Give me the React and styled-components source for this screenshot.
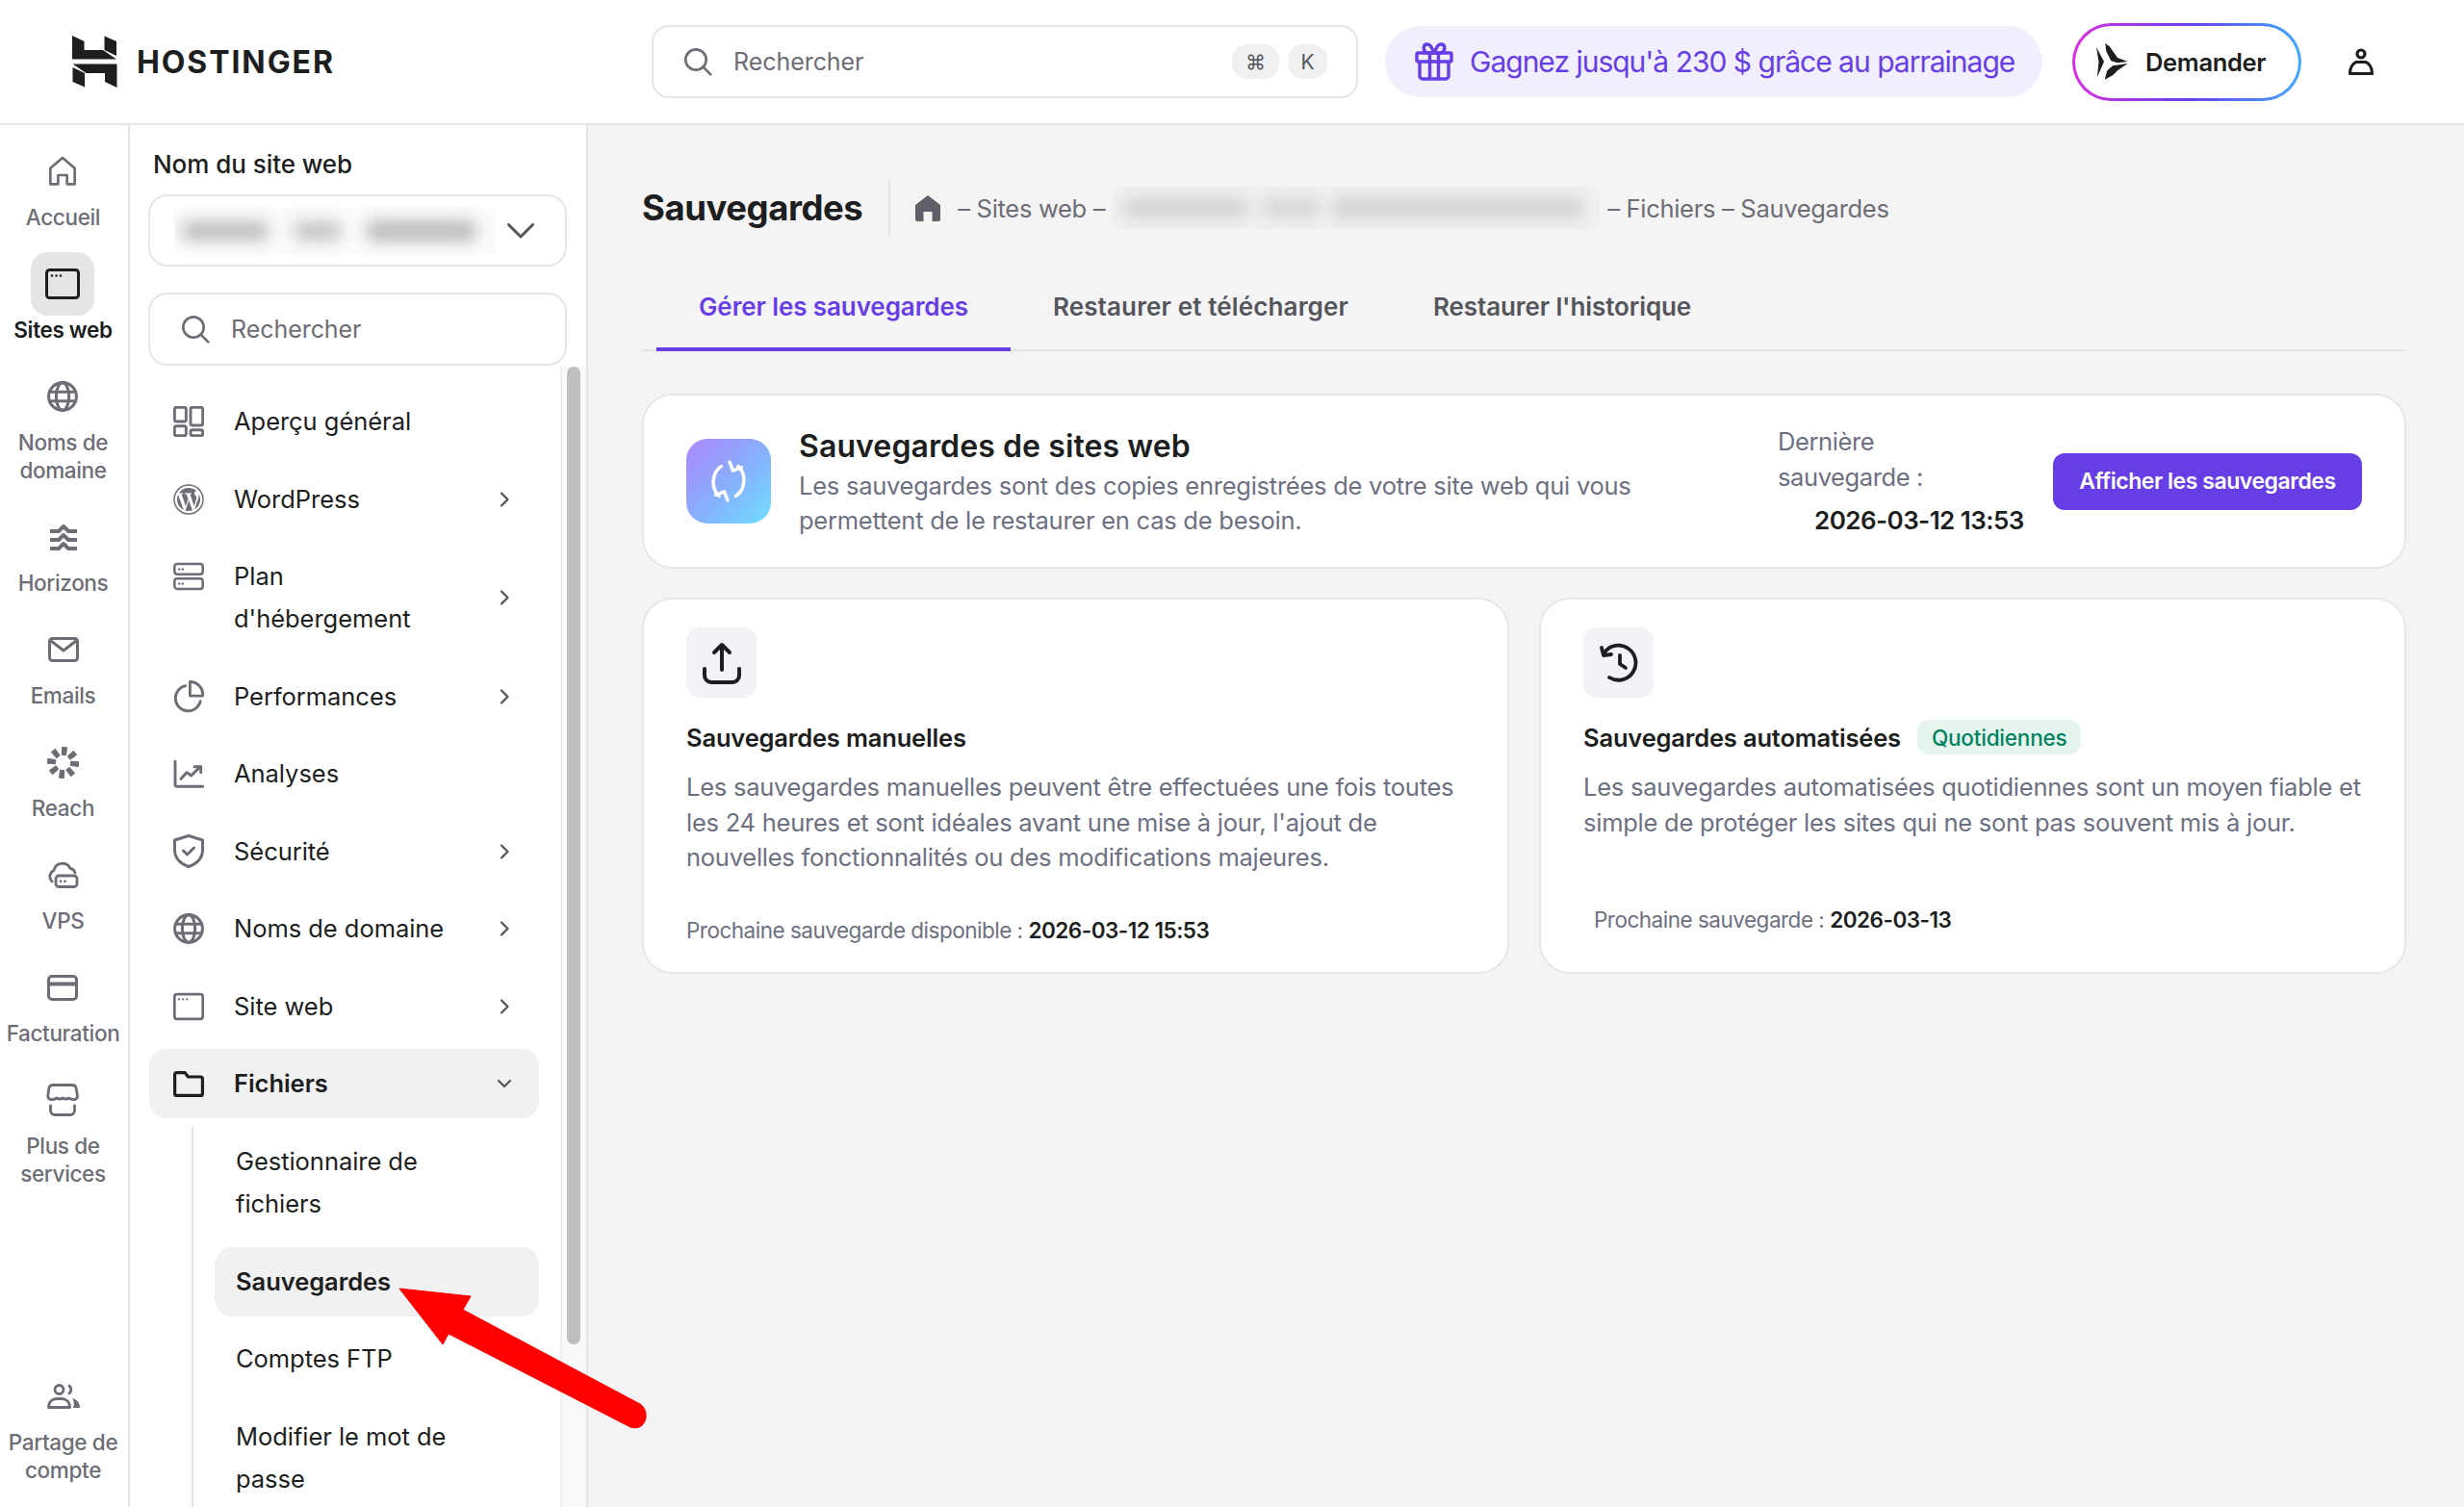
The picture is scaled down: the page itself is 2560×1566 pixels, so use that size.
import React from "react";
import styled, { createGlobalStyle } from "styled-components";

const Global = createGlobalStyle`
  html, body { margin: 0; padding: 0; background: #f4f4f4; }
  * { box-sizing: border-box; }
  body { font-family: "Inter", "Noto Sans", sans-serif; color: #1d1e20; }
`;

const Page = styled.div`
  width: 2560px; height: 1566px; overflow: hidden; position: relative;
  display: flex; flex-direction: column; background: #f4f4f4;
`;
const Header = styled.header`
  height: 130px; flex: none; background: #fff; border-bottom: 2px solid #e5e5e5;
  display: flex; align-items: center;
`;
const LogoWrap = styled.div`
  width: 677px; flex: none; padding-left: 75px; display: flex; align-items: center; gap: 20px; color: #1d1e20;
`;
const LogoText = styled.span`
  font-size: 32px; font-weight: 700; letter-spacing: 1.9px; line-height: 1; padding-top: 2px;
`;
const TopSearch = styled.div`
  width: 734px; height: 76px; flex: none; border: 2px solid #e6e6e6; border-radius: 18px;
  display: flex; align-items: center; padding: 0 30px 0 30px; color: #6d6d75; gap: 21px;
`;
const Placeholder = styled.span`
  font-size: 25px; letter-spacing: -0.05px; color: #6d6d75; flex: 1;
`;
const KbdGroup = styled.div`display: flex; gap: 9px;`;
const Kbd = styled.span`
  height: 36px; min-width: ${p => p.$w}px; border-radius: 16px; background: #f0f0f0; color: #55555c;
  display: inline-flex; align-items: center; justify-content: center; font-size: 21px;
`;
const Promo = styled.div`
  margin-left: 28px; width: 683px; height: 74px; flex: none; border-radius: 37px; background: #f1eefe; color: #673de6;
  display: flex; align-items: center; padding-left: 31px; gap: 17px;
`;
const PromoText = styled.span`font-size: 30px; letter-spacing: -1px; white-space: nowrap;`;
const Ask = styled.div`
  margin-left: 31px; width: 238px; height: 81px; flex: none; border-radius: 41px; padding: 3px;
  background: linear-gradient(90deg, #d92fe0 0%, #6a40e6 50%, #3fa9ff 100%);
`;
const AskInner = styled.div`
  width: 100%; height: 100%; background: #fff; border-radius: 38px; display: flex; align-items: center;
  padding-left: 22px; gap: 17px;
`;
const AskText = styled.span`font-size: 25.5px; font-weight: 600; letter-spacing: -0.35px;`;
const UserBtn = styled.div`margin-left: 48px; display: flex; color: #1d1e20;`;

const Body = styled.div`flex: 1; min-height: 0; display: flex;`;
const Rail = styled.nav`
  width: 135px; flex: none; background: #fff; border-right: 2px solid #e5e5e5;
  display: flex; flex-direction: column; align-items: center; padding: 15px 2px 24px 0; gap: 22px;
`;
const RailItem = styled.div`
  display: flex; flex-direction: column; align-items: center;
  margin-top: ${p => (p.$bottom ? "auto" : "0")};
`;
const RailIcon = styled.div`
  width: 66px; height: 66px; border-radius: 18px; display: flex; align-items: center; justify-content: center;
  background: ${p => (p.$active ? "#e5e5e5" : "transparent")};
  color: ${p => (p.$active ? "#1d1e20" : "#6d6d75")};
`;
const RailLabel = styled.div`
  font-size: 22.5px; line-height: 29px; text-align: center; letter-spacing: -0.35px; font-weight: ${p => (p.$active ? 600 : 500)};
  color: ${p => (p.$active ? "#1d1e20" : "#6d6d75")}; white-space: nowrap;
`;

const Panel = styled.aside`
  width: 476px; flex: none; background: #fff; border-right: 2px solid #e5e5e5; position: relative; overflow: hidden;
  padding: 25px 0 0 19px;
`;
const SiteLabel = styled.div`
  font-size: 26px; font-weight: 500; line-height: 32px; letter-spacing: -0.05px; margin: 0 0 15px 5px;
`;
const SiteSelect = styled.div`
  width: 435px; height: 75px; border: 2px solid #e6e6e6; border-radius: 20px; display: flex; align-items: center;
  padding-left: 25px; color: #55555c;
`;
const Blur = styled.div`
  width: ${p => p.$w}px; height: ${p => p.$h}px; background: ${p => p.$bg}; overflow: hidden; flex: none;
  display: flex; align-items: center; gap: ${p => p.$gap}px; padding-left: ${p => p.$pad}px;
`;
const Blot = styled.span`
  display: block; flex: none; width: ${p => p.$w}px; height: ${p => p.$h}px; background: ${p => p.$c}; border-radius: 8px; filter: blur(8px);
`;
const SelectChevron = styled.div`margin-left: 12px; display: flex;`;
const PanelSearch = styled.div`
  width: 435px; height: 76px; margin-top: 27px; border: 2px solid #e6e6e6; border-radius: 20px;
  display: flex; align-items: center; padding-left: 31px; gap: 21px; color: #6d6d75;
`;
const NavList = styled.div`
  margin-top: 22px; width: 405px; margin-left: 1px; display: flex; flex-direction: column; gap: 8.5px;
`;
const NavRow = styled.div`
  display: flex; align-items: ${p => (p.$top ? "flex-start" : "center")}; padding: 14px 24px 14px 25px; border-radius: 18px;
  background: ${p => (p.$active ? "#f1f1f1" : "transparent")}; position: relative;
`;
const NavIcon = styled.div`
  width: 32px; height: 44px; flex: none; margin-right: 31px; display: flex; align-items: center; justify-content: center;
  color: ${p => (p.$active ? "#1d1e20" : "#6d6d75")};
`;
const NavText = styled.div`
  flex: 1; font-size: 25.5px; line-height: 44px; letter-spacing: -0.04px; font-weight: ${p => (p.$active ? 600 : 400)}; color: #1d1e20;
`;
const NavChevron = styled.div`
  width: 24px; align-self: center; display: flex; justify-content: center; color: #55555c;
`;
const SubList = styled.div`
  margin: 8px 0 0 44px; padding: 1px 0 0 22px; border-left: 2px solid #e3e3e6; display: flex; flex-direction: column; gap: 8.5px;
`;
const SubRow = styled.div`
  padding: 14px 22px; border-radius: 18px; font-size: 25.5px; line-height: 44px; letter-spacing: -0.05px;
  font-weight: ${p => (p.$active ? 600 : 400)}; background: ${p => (p.$active ? "#f1f1f1" : "transparent")}; color: #1d1e20;
`;
const Track = styled.div`
  position: absolute; right: 0; top: 251px; bottom: 0; width: 27px; background: #f9f9f9; border-left: 2px solid #eeeeee;
`;
const Thumb = styled.div`
  position: absolute; left: 5px; top: 0; width: 14px; height: 1016px; border-radius: 7px; background: #bfbfbf;
`;

const Main = styled.main`flex: 1; min-width: 0; padding: 57px 60px 0 56px;`;
const TitleRow = styled.div`display: flex; align-items: center; height: 58px;`;
const Title = styled.h1`
  margin: 0; font-size: 36.5px; font-weight: 700; letter-spacing: -0.45px; line-height: 1; padding-right: 27px;
`;
const Sep = styled.div`width: 2px; height: 58px; background: #e3e3e3; margin-right: 25px;`;
const Crumb = styled.span`
  font-size: 25.5px; letter-spacing: -0.3px; color: #6d6d75; white-space: nowrap; margin: 0 ${p => p.$r}px 0 ${p => p.$l}px;
`;
const Tabs = styled.div`
  margin-top: 28px; height: 92px; padding-left: 15px; border-bottom: 2px solid #e5e5e5; display: flex;
`;
const Tab = styled.div`
  height: 92px; padding: 2px 44px 0; display: flex; align-items: center; font-size: 26px; font-weight: 600;
  letter-spacing: ${p => p.$track ?? -0.1}px; white-space: nowrap;
  color: ${p => (p.$active ? "#673de6" : "#55555c")}; border-bottom: 4px solid ${p => (p.$active ? "#673de6" : "transparent")};
`;
const Card = styled.section`
  background: #fff; border: 2px solid #e8e8e8; border-radius: 32px;
`;
const TopCard = styled(Card)`
  margin-top: 44px; height: 182px; display: flex; align-items: center; padding: 0 44px;
`;
const Gradient = styled.div`
  width: 88px; height: 88px; flex: none; border-radius: 22px; color: #fff; display: flex; align-items: center; justify-content: center;
  background: linear-gradient(135deg, #ae86fb 0%, #88aefd 50%, #6fdfff 100%);
`;
const TopText = styled.div`margin-left: 29px; width: 901px; flex: none; padding-top: 1px;`;
const TopTitle = styled.h2`margin: 0; font-size: 32px; line-height: 44px; font-weight: 600; letter-spacing: 0.1px;`;
const Desc = styled.p`
  margin: ${p => p.$m || 0}px 0 0; font-size: 25.5px; line-height: 36.5px; letter-spacing: -0.25px; color: #6d7081;
`;
const Last = styled.div`margin-left: 116px; width: 254px; flex: none; padding-top: 2px;`;
const LastLabel = styled.div`font-size: 25.5px; line-height: 37px; letter-spacing: -0.4px; color: #6d7081;`;
const LastDate = styled.div`
  font-size: 26px; line-height: 42px; margin-top: 6px; font-weight: 600; letter-spacing: -0.55px; white-space: nowrap; margin-left: 38px; color: #1d1e20;
`;
const PrimaryBtn = styled.button`
  margin-left: 32px; width: 323px; height: 59px; border: none; border-radius: 12px; background: #673de6; color: #fff;
  font: 600 23px "Inter", sans-serif; letter-spacing: -0.45px; white-space: nowrap;
`;
const Grid = styled.div`margin-top: 30px; display: grid; grid-template-columns: 1fr 1fr; gap: 31px;`;
const FeatureCard = styled(Card)`
  height: 391px; padding: 29px 44px 28px; display: flex; flex-direction: column;
`;
const IconTile = styled.div`
  width: 73px; height: 73px; border-radius: 14px; background: #f2f3f7; display: flex; align-items: center; justify-content: center; color: #1d1e20;
`;
const FeatureHead = styled.div`margin-top: 23px; height: 36px; display: flex; align-items: center; gap: 17px;`;
const FeatureTitle = styled.h3`margin: 0; font-size: 25.5px; font-weight: 600; letter-spacing: -0.17px; white-space: nowrap;`;
const Badge = styled.span`
  height: 36px; padding: 0 15px; border-radius: 12px; background: #e6f4ee; color: #008361; font-size: 22.5px; font-weight: 500; letter-spacing: -0.2px;
  display: inline-flex; align-items: center;
`;
const Foot = styled.div`
  margin-top: auto; font-size: 22.5px; line-height: 30px; letter-spacing: -0.5px; color: #6d7081; white-space: nowrap;
  padding-left: ${p => (p.$inset ? 11 : 0)}px; margin-bottom: ${p => (p.$inset ? 11 : 0)}px;
`;
const FootDate = styled.b`font-weight: 600; color: #1d1e20; letter-spacing: -0.5px;`;
const Arrow = styled.svg`position: absolute; left: 400px; top: 1330px;`;

const S = ({ size = 32, w = 2, children, fill = "none", vb = 24 }) => (
  <svg width={size} height={size} viewBox={`0 0 ${vb} ${vb}`} fill={fill} stroke="currentColor" strokeWidth={w} strokeLinecap="round" strokeLinejoin="round">{children}</svg>
);
const Logo = () => (
  <svg width="47" height="54" viewBox="0 0 47 54" fill="currentColor">
    <path d="M0 0l12.500 6v9H32l14 9.500H0z" />
    <path d="M33.500 .5L46 6v15l-12.500-6z" />
    <path d="M46.500 54L34 48v-9H14.500L.5 29.500h46z" />
    <path d="M13 53.500L.5 48V33L13 39z" />
  </svg>
);
const SearchI = ({ size = 32 }) => <S size={size} w={2}><circle cx="10.500" cy="10.500" r="8" /><path d="M16.500 16.500L22 22" /></S>;
const HomeI = () => <S><path d="M2.500 22V9.500L12 1.500l9.500 8V22h-6v-7h-7v7z" /></S>;
const BrowserI = () => (
  <svg width="36" height="32" viewBox="0 0 36 32" fill="none" stroke="currentColor" strokeWidth="3" strokeLinecap="round">
    <rect x="1.500" y="1.500" width="33" height="29" rx="3" /><path d="M7 7.500h.01M11.500 7.500h.01M16 7.500h.01" strokeWidth="2.600" />
  </svg>
);
const GlobeI = () => <S w={2.300}><circle cx="12" cy="12" r="10.800" /><ellipse cx="12" cy="12" rx="5" ry="10.800" /><path d="M1.800 8.500h20.400M1.800 15.500h20.400" /></S>;
const HorizonsI = () => (
  <svg width="30" height="30" viewBox="0 0 30 30" fill="none" stroke="currentColor" strokeWidth="4" strokeLinejoin="round">
    <path d="M1 9H10L15 4L20 9H29" /><path d="M1 18H10L15 13L20 18H29" /><path d="M1 27H10L15 22L20 27H29" />
  </svg>
);
const MailI = () => (
  <svg width="32" height="26" viewBox="0 0 32 26" fill="none" stroke="currentColor" strokeWidth="3" strokeLinejoin="round">
    <rect x="1.500" y="1.500" width="29" height="23" rx="3" /><path d="M3 4l13 10 13-10" />
  </svg>
);
const ReachI = () => (
  <svg width="33" height="33" viewBox="0 0 33 33" fill="currentColor">
    {[0, 45, 90, 135, 180, 225, 270, 315].map(a => <path key={a} d="M13.500 0h6l-.5 9h-5z" transform={`rotate(${a + 6} 16.500 16.500)`} />)}
  </svg>
);
const VpsI = () => (
  <svg width="32" height="28" viewBox="0 0 32 28" fill="none" stroke="currentColor" strokeWidth="2.800" strokeLinecap="round" strokeLinejoin="round">
    <path d="M4 21A7 7 0 0 1 6 9.500 9 9 0 0 1 23 7.500a6 6 0 0 1 5 4.500" /><rect x="8" y="15" width="22" height="11.500" rx="3" /><path d="M13 20.800h.01M17.500 20.800h.01" />
  </svg>
);
const CardI = () => (
  <svg width="32" height="27" viewBox="0 0 32 27" fill="none" stroke="currentColor" strokeWidth="3">
    <rect x="1.500" y="1.500" width="29" height="24" rx="3.500" /><path d="M1.500 9.500h29" strokeWidth="4" />
  </svg>
);
const StoreI = () => (
  <svg width="34" height="34" viewBox="0 0 34 34" fill="none" stroke="currentColor" strokeWidth="2.800" strokeLinecap="round" strokeLinejoin="round">
    <path d="M7 1.500H27Q30 1.500 31 4L32.500 13q0 3-3 3.500q-3 .5-6.200-1.500q-3 2-6.200 0q-3 2-6.200 0q-3 2-6.200 1.500q-3-.5-3-3.500L3 4Q4 1.500 7 1.500z" />
    <path d="M4.500 23v5a4.500 4.500 0 0 0 4.500 4.500h16a4.500 4.500 0 0 0 4.500-4.500v-5" />
  </svg>
);
const UsersI = () => (
  <svg width="34" height="26" viewBox="0 0 34 26" fill="none" stroke="currentColor" strokeWidth="2.800" strokeLinejoin="round">
    <circle cx="12.500" cy="6" r="4.500" /><path d="M1.500 24.500c0-6 4-9 8.500-9h5c4.500 0 8.500 3 8.500 9z" />
    <path d="M22 1.500a5 5 0 0 1 0 9" /><path fill="currentColor" stroke="none" d="M27 25h7c0-5.500-3-9-8-10 1.500 2 2.500 6 1 10z" />
  </svg>
);
const OverviewI = () => (
  <S w={2.200}><rect x="1" y="1" width="9" height="11" rx="1.500" /><rect x="1" y="15.500" width="9" height="7.500" rx="1.500" /><rect x="13.500" y="1" width="9.500" height="14" rx="1.500" /><rect x="13.500" y="18.500" width="9.500" height="4.500" rx="1.500" /></S>
);
const WpI = () => (
  <svg width="32" height="32" viewBox="0 0 32 32" fill="none" stroke="currentColor" strokeWidth="1.500">
    <circle cx="16" cy="16" r="15" />
    <path fill="currentColor" stroke="none" d="M4 16c0 4.800 2.800 8.900 6.800 10.800L5 11.100A11.900 11.900 0 0 0 4 16zm20.200-.6c0-1.500-.5-2.500-1-3.300-.6-1-1.200-1.800-1.200-2.800 0-1.100.8-2.100 2-2.100h.2A12 12 0 0 0 6 9.400h.8c1.300 0 3.200-.2 3.200-.2.600 0 .7.900 0 1l-1.400.1 4.300 12.900 2.600-7.800-1.900-5.100-1.300-.1c-.6 0-.6-1 .1-1 0 0 2 .2 3.100.2 1.300 0 3.200-.2 3.200-.2.700 0 .7.900.1 1l-1.400.1 4.300 12.800 1.200-4c.5-1.700.9-2.900.9-3.900zM16.200 17.100L12.600 27.500a12 12 0 0 0 7.400-.2l-.1-.2zm10.300-6.800c0 .4.100.8.100 1.300 0 1.200-.2 2.600-.9 4.300l-3.700 10.600A12 12 0 0 0 26.500 10.300z" />
  </svg>
);
const ServerI = () => (
  <svg width="36" height="32" viewBox="0 0 36 32" fill="none" stroke="currentColor" strokeWidth="2.800" strokeLinecap="round">
    <rect x="1.500" y="1.500" width="33" height="12" rx="3" /><rect x="1.500" y="18.500" width="33" height="12" rx="3" />
    <path d="M7 7.500h.01M11 7.500h.01M7 24.500h.01M11 24.500h.01" />
  </svg>
);
const PieI = () => (
  <svg width="34" height="36" viewBox="0 0 34 36" fill="none" stroke="currentColor" strokeWidth="3" strokeLinejoin="round" strokeLinecap="round">
    <path d="M13.500 6A14 14 0 1 0 30 23" /><path d="M18.500 1.500A14 14 0 0 1 32.500 17H18.500z" />
  </svg>
);
const ChartI = () => <S w={2.200}><path d="M1.500 2.500v18a1.500 1.500 0 0 0 1.500 1.500h20" /><path d="M6 16l4.500-5 3.500 2.500 7-7" /><path d="M16.500 6.500H21.500V11" /></S>;
const ShieldI = () => (
  <svg width="32" height="35" viewBox="0 0 32 35" fill="none" stroke="currentColor" strokeWidth="3" strokeLinecap="round" strokeLinejoin="round">
    <path d="M16 1.500L30.500 6V16c0 8.500-6 14.500-14.500 17.500C7.500 30.500 1.500 24.500 1.500 16V6z" /><path d="M10.500 17l4 4 7-7" />
  </svg>
);
const FolderI = () => (
  <svg width="32" height="27" viewBox="0 0 32 27" fill="none" stroke="currentColor" strokeWidth="3.200" strokeLinejoin="round">
    <path d="M1.600 3.500A2 2 0 0 1 3.600 1.600h8.400l3.500 4.400H28.400a2 2 0 0 1 2 2V23.400a2 2 0 0 1-2 2H3.600a2 2 0 0 1-2-2z" />
  </svg>
);
const Chevron = ({ down, size = 24, w = 2.300 }) => <S size={size} w={w}><path d={down ? "M6 9l6 6 6-6" : "M9 5.500l6.500 6.500L9 18.500"} /></S>;
const SelectChev = () => (
  <svg width="28" height="16" viewBox="0 0 28 16" fill="none" stroke="currentColor" strokeWidth="3" strokeLinecap="round" strokeLinejoin="round"><path d="M1.500 1.500L14 14 26.500 1.500" /></svg>
);
const GiftI = () => (
  <svg width="40" height="40" viewBox="0 0 40 40" fill="none" stroke="currentColor" strokeWidth="3.400" strokeLinejoin="round">
    <rect x="2" y="11" width="36" height="9" rx="1.500" /><path d="M5 20v15a3 3 0 0 0 3 3h24a3 3 0 0 0 3-3V20M15.500 11v27M24.500 11v27" />
    <path d="M20 11c-2-4-3-9-7-9-5 0-5 7-.5 9zM20 11c2-4 3-9 7-9 5 0 5 7 .5 9z" />
  </svg>
);
const SparkI = () => (
  <svg width="34" height="38" viewBox="0 0 34 38" fill="#1d1e20">
    <path d="M0 4L8 19 1 35 2.500 19z" />
    <path d="M9.300 0L13.700 3.300 22 15 32.700 19 22 20.300 15.300 18.300 10.300 8.300z" />
    <path d="M8.700 37.700L11.300 28.300 17 23.300 32.700 21 22 28.300 17 33.300z" />
  </svg>
);
const UserI = () => (
  <svg width="28" height="28" viewBox="0 0 28 28" fill="none" stroke="currentColor" strokeWidth="3.200" strokeLinejoin="round">
    <circle cx="14" cy="6" r="4" /><path d="M2.500 26.500c0-6 3-10.500 6.500-12h10c3.500 1.500 6.500 6 6.500 12z" />
  </svg>
);
const HomeSolid = () => (
  <svg width="28" height="28" viewBox="0 0 28 28" fill="#5f5f68"><path d="M14 1L27 11v15a2 2 0 0 1-2 2h-6.500V18h-9v10H3a2 2 0 0 1-2-2V11z" /></svg>
);
const SyncI = () => (
  <svg width="44" height="44" viewBox="0 0 40 40" fill="none" stroke="currentColor" strokeWidth="3.200" strokeLinecap="round" strokeLinejoin="round">
    <path d="M13 6C4 12 3 27 11 34" /><path d="M27 34c9-6 10-21 2-28" /><path d="M21 2l3 8 8-3" /><path d="M19 38l-3-8-8 3" />
  </svg>
);
const UploadI = () => (
  <svg width="40" height="44" viewBox="0 0 40 44" fill="none" stroke="currentColor" strokeWidth="4" strokeLinecap="round" strokeLinejoin="round">
    <path d="M20 29V4M12 11l8-8 8 8" /><path d="M2 28v7a7 7 0 0 0 7 7h22a7 7 0 0 0 7-7v-7" />
  </svg>
);
const HistoryI = () => (
  <svg width="42" height="42" viewBox="0 0 42 42" fill="none" stroke="currentColor" strokeWidth="3.800" strokeLinecap="round" strokeLinejoin="round">
    <path d="M6 10A18 18 0 1 1 11 36" /><path d="M3 5l2 8 8-1" /><path d="M22 13v9l6 4" />
  </svg>
);

const rail = [
  { l: <>Accueil</>, i: <HomeI /> },
  { l: <>Sites web</>, i: <BrowserI />, a: true },
  { l: <>Noms de<br />domaine</>, i: <GlobeI /> },
  { l: <>Horizons</>, i: <HorizonsI /> },
  { l: <>Emails</>, i: <MailI /> },
  { l: <>Reach</>, i: <ReachI /> },
  { l: <>VPS</>, i: <VpsI /> },
  { l: <>Facturation</>, i: <CardI /> },
  { l: <>Plus de<br />services</>, i: <StoreI /> },
];
const nav = [
  { t: <>Aperçu général</>, i: <OverviewI /> },
  { t: <>WordPress</>, i: <WpI />, c: true },
  { t: <>Plan<br />d'hébergement</>, i: <ServerI />, c: true, top: true },
  { t: <>Performances</>, i: <PieI />, c: true },
  { t: <>Analyses</>, i: <ChartI /> },
  { t: <>Sécurité</>, i: <ShieldI />, c: true },
  { t: <>Noms de domaine</>, i: <GlobeI />, c: true },
  { t: <>Site web</>, i: <BrowserI />, c: true },
];

export default function App() {
  return (
    <Page>
      <Global />
      <Header>
        <LogoWrap><Logo /><LogoText>HOSTINGER</LogoText></LogoWrap>
        <TopSearch>
          <SearchI />
          <Placeholder>Rechercher</Placeholder>
          <KbdGroup>
            <Kbd $w={49}>⌘</Kbd>
            <Kbd $w={41}>K</Kbd>
          </KbdGroup>
        </TopSearch>
        <Promo><GiftI /><PromoText>Gagnez jusqu'à 230 $ grâce au parrainage</PromoText></Promo>
        <Ask><AskInner><SparkI /><AskText>Demander</AskText></AskInner></Ask>
        <UserBtn><UserI /></UserBtn>
      </Header>
      <Body>
        <Rail>
          {rail.map((r, k) => (
            <RailItem key={k}>
              <RailIcon $active={r.a}>{r.i}</RailIcon>
              <RailLabel $active={r.a}>{r.l}</RailLabel>
            </RailItem>
          ))}
          <RailItem $bottom>
            <RailIcon><UsersI /></RailIcon>
            <RailLabel>Partage de<br />compte</RailLabel>
          </RailItem>
        </Rail>
        <Panel>
          <SiteLabel>Nom du site web</SiteLabel>
          <SiteSelect>
            <Blur $w={334} $h={50} $bg="#fbfbfb" $gap={26} $pad={8}>
              <Blot $w={90} $h={20} $c="#bdbdbd" /><Blot $w={50} $h={20} $c="#c4c4c4" /><Blot $w={114} $h={22} $c="#bbbbbb" />
            </Blur>
            <SelectChevron><SelectChev /></SelectChevron>
          </SiteSelect>
          <PanelSearch><SearchI /><Placeholder>Rechercher</Placeholder></PanelSearch>
          <NavList>
            {nav.map((n, k) => (
              <NavRow key={k} $top={n.top}>
                <NavIcon>{n.i}</NavIcon>
                <NavText>{n.t}</NavText>
                {n.c && <NavChevron><Chevron /></NavChevron>}
              </NavRow>
            ))}
            <div>
              <NavRow $active>
                <NavIcon $active><FolderI /></NavIcon>
                <NavText $active>Fichiers</NavText>
                <NavChevron><Chevron down /></NavChevron>
              </NavRow>
              <SubList>
                <SubRow>Gestionnaire de<br />fichiers</SubRow>
                <SubRow $active>Sauvegardes</SubRow>
                <SubRow>Comptes FTP</SubRow>
                <SubRow>Modifier le mot de<br />passe</SubRow>
              </SubList>
            </div>
          </NavList>
          <Track><Thumb /></Track>
        </Panel>
        <Main>
          <TitleRow>
            <Title>Sauvegardes</Title>
            <Sep />
            <HomeSolid />
            <Crumb $l={17} $r={7}>– Sites web –</Crumb>
            <Blur $w={507} $h={44} $bg="#f0f0f0" $gap={14} $pad={12}>
              <Blot $w={130} $h={18} $c="#cfcfcf" /><Blot $w={60} $h={18} $c="#d4d4d4" /><Blot $w={260} $h={20} $c="#d0d0d0" />
            </Blur>
            <Crumb $l={8} $r={0}>– Fichiers – Sauvegardes</Crumb>
          </TitleRow>
          <Tabs>
            <Tab $active>Gérer les sauvegardes</Tab>
            <Tab $track={0.14}>Restaurer et télécharger</Tab>
            <Tab>Restaurer l'historique</Tab>
          </Tabs>
          <TopCard>
            <Gradient><SyncI /></Gradient>
            <TopText>
              <TopTitle>Sauvegardes de sites web</TopTitle>
              <Desc $m={1}>Les sauvegardes sont des copies enregistrées de votre site web qui vous<br />permettent de le restaurer en cas de besoin.</Desc>
            </TopText>
            <Last>
              <LastLabel>Dernière<br />sauvegarde :</LastLabel>
              <LastDate>2026-03-12 13:53</LastDate>
            </Last>
            <PrimaryBtn>Afficher les sauvegardes</PrimaryBtn>
          </TopCard>
          <Grid>
            <FeatureCard>
              <IconTile><UploadI /></IconTile>
              <FeatureHead><FeatureTitle>Sauvegardes manuelles</FeatureTitle></FeatureHead>
              <Desc $m={16}>Les sauvegardes manuelles peuvent être effectuées une fois toutes<br />les 24 heures et sont idéales avant une mise à jour, l'ajout de<br />nouvelles fonctionnalités ou des modifications majeures.</Desc>
              <Foot>Prochaine sauvegarde disponible : <FootDate>2026-03-12 15:53</FootDate></Foot>
            </FeatureCard>
            <FeatureCard>
              <IconTile><HistoryI /></IconTile>
              <FeatureHead><FeatureTitle>Sauvegardes automatisées</FeatureTitle><Badge>Quotidiennes</Badge></FeatureHead>
              <Desc $m={16}>Les sauvegardes automatisées quotidiennes sont un moyen fiable et<br />simple de protéger les sites qui ne sont pas souvent mis à jour.</Desc>
              <Foot $inset>Prochaine sauvegarde : <FootDate>2026-03-13</FootDate></Foot>
            </FeatureCard>
          </Grid>
        </Main>
      </Body>
      <Arrow width="290" height="170" viewBox="0 0 290 170">
        <path d="M15 9L89 17L81 31L265 129C276 136 272 158 255 153L66 56L60 67z" fill="#ff0000" stroke="#ff0000" strokeWidth="1" strokeLinejoin="round" />
      </Arrow>
    </Page>
  );
}
